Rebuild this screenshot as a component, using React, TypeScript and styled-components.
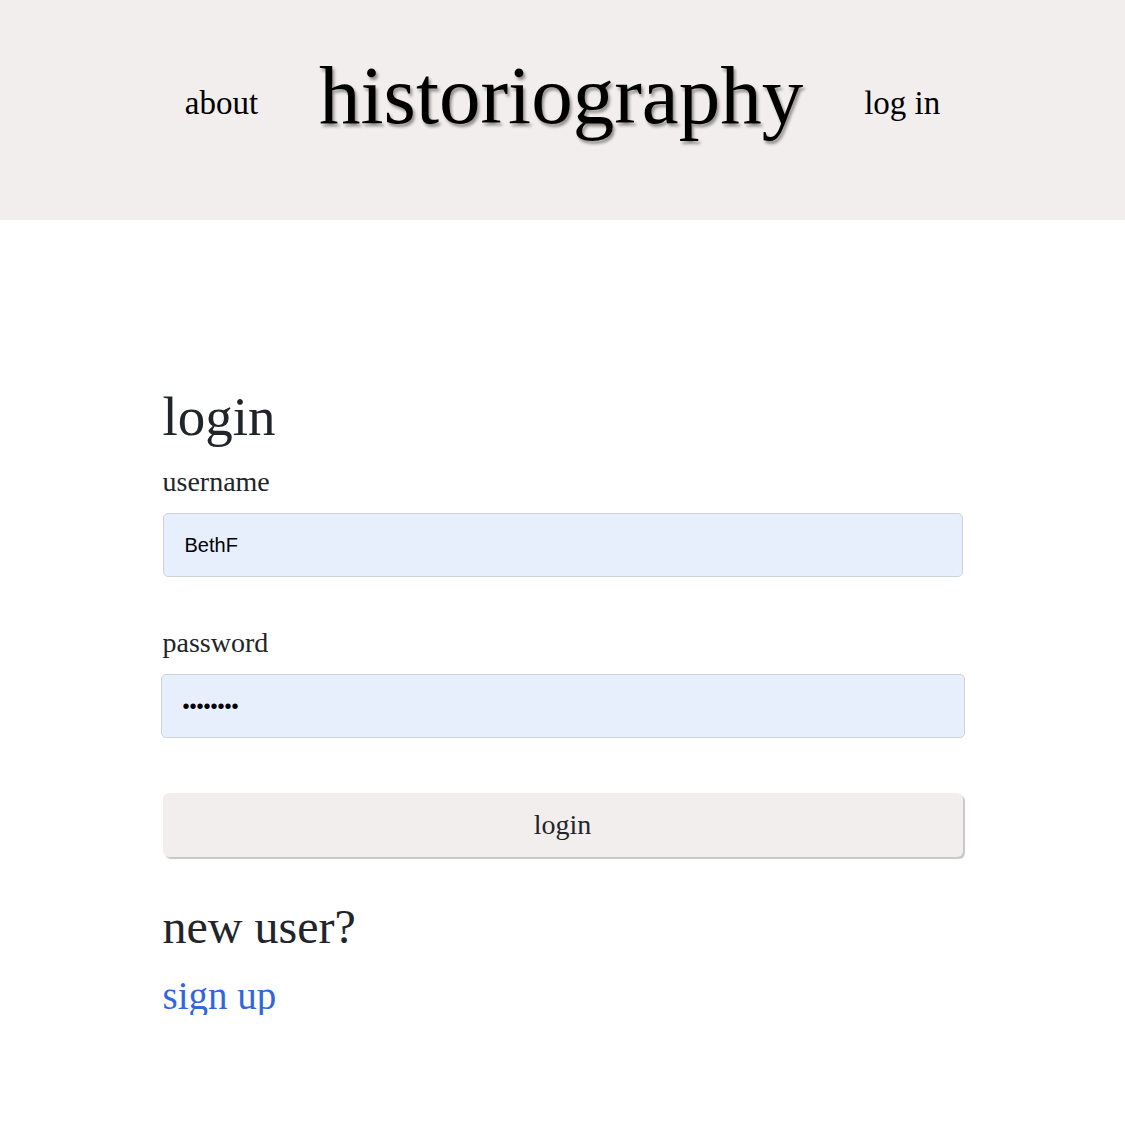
import React from "react";
import styled, { createGlobalStyle } from "styled-components";

const Global = createGlobalStyle`
  html, body { margin: 0; padding: 0; background: #ffffff; }
  body { font-family: "Liberation Serif", "Times New Roman", serif; color: #212529; }
  * { box-sizing: border-box; }
`;

const Header = styled.header`
  height: 220px;
  background: #f2eeed;
  display: flex;
  justify-content: center;
  align-items: center;
  gap: 61px;
  padding-bottom: 8px;
`;

const NavLink = styled.a`
  font-size: 33px;
  color: #000;
  text-decoration: none;
  line-height: 1;
  margin-top: -6px;
`;

const Title = styled.h1`
  margin: -22px 0 0;
  font-size: 83px;
  font-weight: 400;
  line-height: 1;
  color: #000;
  text-shadow: 2px 3px 3px rgba(0, 0, 0, 0.4);
`;

const Main = styled.main`
  width: 800px;
  margin: 0 auto;
  padding-top: 169px;
  display: flex;
  flex-direction: column;
`;

const Heading = styled.h2`
  margin: 0 0 24px;
  font-size: 55px;
  font-weight: 400;
  line-height: 1;
`;

const Label = styled.label`
  font-size: 28px;
  line-height: 1;
  margin-bottom: 17px;
`;

const Input = styled.input<{ $wide?: boolean }>`
  height: 64px;
  width: ${(p) => (p.$wide ? "804px" : "800px")};
  margin-left: ${(p) => (p.$wide ? "-2px" : "0")};
  background: #e8effc;
  border: 1px solid #ccd3dc;
  border-radius: 5px;
  padding: 0 21px;
  font-family: "Liberation Sans", Arial, sans-serif;
  font-size: 20px;
  color: #000;
  margin-bottom: 52px;
  outline: none;
`;

const Button = styled.button`
  height: 64px;
  width: 800px;
  margin-top: 3px;
  background: #f2eeed;
  border: none;
  border-radius: 6px;
  box-shadow: 2px 2px 1px rgba(0, 0, 0, 0.22);
  font-family: "Liberation Serif", "Times New Roman", serif;
  font-size: 28px;
  color: #212529;
`;

const SubHeading = styled.h3`
  margin: 46px 0 0;
  font-size: 48px;
  font-weight: 400;
  line-height: 1;
`;

const SignUp = styled.a`
  margin-top: 25px;
  font-size: 39px;
  line-height: 1;
  color: #3366dd;
  text-decoration: none;
`;

export default function App() {
  return (
    <>
      <Global />
      <Header>
        <NavLink href="#">about</NavLink>
        <Title>historiography</Title>
        <NavLink href="#">log in</NavLink>
      </Header>
      <Main>
        <Heading>login</Heading>
        <Label>username</Label>
        <Input type="text" defaultValue="BethF" />
        <Label>password</Label>
        <Input type="password" defaultValue="abcdefgh" $wide />
        <Button>login</Button>
        <SubHeading>new user?</SubHeading>
        <SignUp href="#">sign up</SignUp>
      </Main>
    </>
  );
}
